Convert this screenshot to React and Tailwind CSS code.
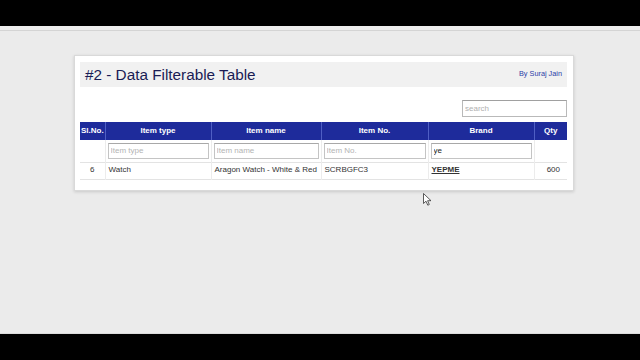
import React from 'react';

const columns = [
    { key: 'sl', label: 'Sl.No.', width: 'w-[25px]' },
    { key: 'type', label: 'Item type', width: 'w-[106px]', placeholder: 'Item type' },
    { key: 'name', label: 'Item name', width: 'w-[110px]', placeholder: 'Item name' },
    { key: 'no', label: 'Item No.', width: 'w-[107px]', placeholder: 'Item No.' },
    { key: 'brand', label: 'Brand', width: 'w-[106px]', placeholder: '', value: 'ye' },
    { key: 'qty', label: 'Qty', width: 'w-[33px]' },
];

function Cursor() {
    return (
        <svg className="absolute left-[423px] top-[193px]" width="9" height="13" viewBox="0 0 9 13">
            <path d="M0.5 0.5 L0.5 10.5 L3 8.2 L4.8 12.2 L6.3 11.5 L4.6 7.7 L8 7.7 Z" fill="#fff" stroke="#333" strokeWidth="0.8" strokeLinejoin="round" />
        </svg>
    );
}

export default function App() {
    return (
        <div className="relative w-[640px] h-[360px] bg-[#ebebeb] flex flex-col overflow-hidden" style={{ fontFamily: '"Liberation Sans", Arial, sans-serif' }}>
            <div className="h-[26px] bg-black flex-shrink-0"></div>
            <div className="h-[5px] border-b border-[#d4d4d4] bg-[#eeeeee] flex-shrink-0"></div>

            <div className="mt-[24px] ml-[74px] w-[500px] bg-white border border-[#d9d9d9] shadow-[0_1px_3px_rgba(0,0,0,0.15)] pl-[5px] pr-[6px] pt-[6px] pb-[10px]">
                {/* Title bar */}
                <div className="h-[25px] bg-[#f1f1f1] flex items-center justify-between pl-[5px] pr-[5px]">
                    <h1 className="text-[15.3px] leading-none text-[#1a1c55]">#2 - Data Filterable Table</h1>
                    <span className="text-[7.3px] text-[#2b3fa8]">By Suraj Jain</span>
                </div>

                <div className="flex justify-end mt-[13px]">
                    <input
                        placeholder="search"
                        readOnly
                        className="w-[105px] h-[17px] border border-[#b9b9b9] border-t-[#a0a0a0] px-[2px] text-[8px] placeholder:text-[#b0b0b0] outline-none"
                    />
                </div>

                <table className="mt-[5px] w-[487px] border-collapse table-fixed text-[8px]">
                    <thead>
                        <tr className="h-[18px] bg-[#1e2b9b] text-white">
                            {columns.map((c, i) => (
                                <th
                                    key={c.key}
                                    className={`${c.width} font-bold ${i === 0 ? 'text-left pl-[1px]' : 'text-center'} ${i > 0 ? 'border-l border-[#4f5fc4]' : ''}`}
                                >
                                    {c.label}
                                </th>
                            ))}
                        </tr>
                    </thead>
                    <tbody>
                        <tr className="h-[22px] border-b border-[#e3e3e3]">
                            {columns.map((c, i) => (
                                <td key={c.key} className={`px-[2px] ${i > 0 ? 'border-l border-[#ececec]' : ''}`}>
                                    {c.placeholder !== undefined && (
                                        <input
                                            readOnly
                                            placeholder={c.placeholder}
                                            defaultValue={c.value}
                                            className="w-full h-[16px] border border-[#c4c4c4] border-t-[#a8a8a8] px-[2px] text-[8px] text-[#222] placeholder:text-[#b4b4b4] outline-none"
                                        />
                                    )}
                                </td>
                            ))}
                        </tr>
                        <tr className="h-[17px] border-b border-[#e3e3e3] text-[#333] align-bottom">
                            <td className="text-center pb-[3px]">6</td>
                            <td className="pl-[3px] pb-[3px] border-l border-[#ececec]">Watch</td>
                            <td className="pl-[3px] pb-[3px] border-l border-[#ececec] whitespace-nowrap">Aragon Watch - White &amp; Red</td>
                            <td className="pl-[3px] pb-[3px] border-l border-[#ececec]">SCRBGFC3</td>
                            <td className="pl-[3px] pb-[3px] border-l border-[#ececec] font-bold underline">YEPME</td>
                            <td className="text-right pr-[7px] pb-[3px] border-l border-[#ececec]">600</td>
                        </tr>
                    </tbody>
                </table>
            </div>

            <div className="flex-1"></div>
            <div className="h-[1px] bg-[#dcdcdc] flex-shrink-0"></div>
            <div className="h-[26px] bg-black flex-shrink-0"></div>

            <Cursor />
        </div>
    );
}
